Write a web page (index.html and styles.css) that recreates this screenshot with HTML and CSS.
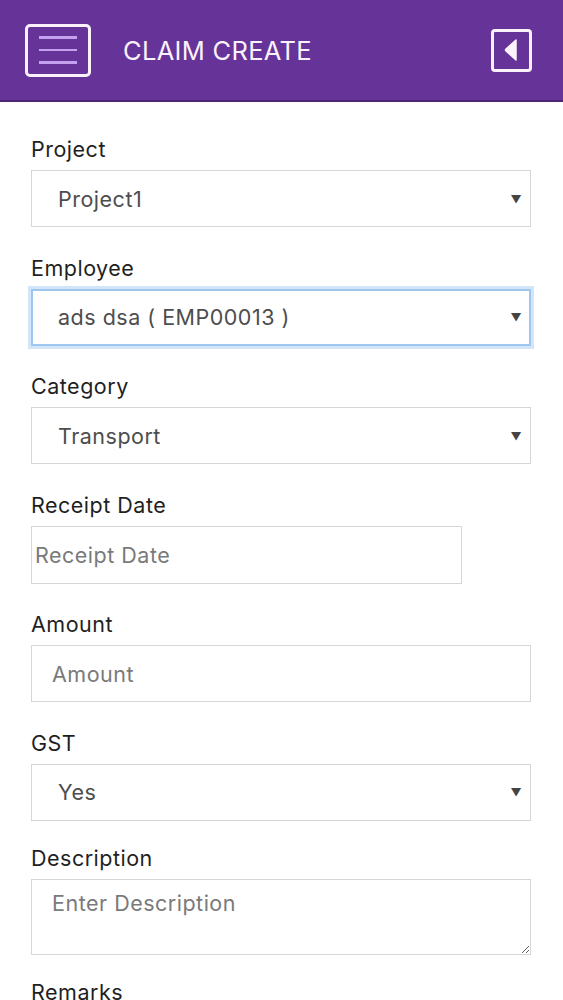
FILE: index.html
```html
<!DOCTYPE html>
<html lang="en">
<head>
  <meta charset="UTF-8" />
  <meta name="viewport" content="width=device-width, initial-scale=1.0"/>
  <title>Claim Create</title>
  <link rel="stylesheet" href="styles.css">
</head>
<body>

  <header class="topbar">
    <button class="menu-btn" type="button" aria-label="Menu">
      <span></span>
      <span></span>
      <span></span>
    </button>
    <h1 class="title">CLAIM CREATE</h1>
    <button class="back-btn" type="button" aria-label="Back">
      <svg width="14" height="22" viewBox="0 0 14 22">
        <path d="M12 1 L12 21 L2 12 Q1 11 2 10 Z" fill="#fdf3fd" stroke="#fdf3fd" stroke-width="1.5" stroke-linejoin="round"/>
      </svg>
    </button>
  </header>

  <form class="claim-form" id="claimForm">
    <div class="field">
      <label for="project">Project</label>
      <div class="select-wrap">
        <select id="project">
          <option>Project1</option>
        </select>
      </div>
    </div>

    <div class="field">
      <label for="employee">Employee</label>
      <div class="select-wrap">
        <select id="employee" class="focused">
          <option>ads dsa ( EMP00013 )</option>
        </select>
      </div>
    </div>

    <div class="field">
      <label for="category">Category</label>
      <div class="select-wrap">
        <select id="category">
          <option>Transport</option>
        </select>
      </div>
    </div>

    <div class="field">
      <label for="receiptDate">Receipt Date</label>
      <input type="text" id="receiptDate" class="date-input" placeholder="Receipt Date">
    </div>

    <div class="field">
      <label for="amount">Amount</label>
      <input type="text" id="amount" placeholder="Amount">
    </div>

    <div class="field">
      <label for="gst">GST</label>
      <div class="select-wrap">
        <select id="gst">
          <option>Yes</option>
          <option>No</option>
        </select>
      </div>
    </div>

    <div class="field field-area">
      <label for="description">Description</label>
      <textarea id="description" placeholder="Enter Description"></textarea>
    </div>

    <div class="field field-area">
      <label for="remarks">Remarks</label>
      <textarea id="remarks" placeholder="Enter Remarks"></textarea>
    </div>
  </form>

</body>
</html>
```

FILE: styles.css
```css
:root {
  --purple: #663399;
  --purple-dark: #4b2772;
  --header-text: #fbf1fb;
  --menu-line: #c4a0ee;
  --label-color: #1f1f1f;
  --value-color: #4d4d4d;
  --placeholder: #7a7a7a;
  --border: #d6d6d6;
}

body {
  margin: 0;
  font-family: Inter, "Open Sans", sans-serif;
  background-color: white;
  color: var(--label-color);
}

.topbar {
  display: flex;
  align-items: center;
  height: 100px;
  padding: 0 31px 0 25px;
  background-color: var(--purple);
  border-bottom: 2px solid var(--purple-dark);
}

.menu-btn {
  width: 66px;
  height: 53px;
  padding: 0;
  border: 3px solid var(--header-text);
  border-radius: 5px;
  background: transparent;
  display: flex;
  flex-direction: column;
  align-items: center;
  justify-content: center;
  gap: 10px;
  cursor: pointer;
}

.menu-btn span {
  display: block;
  width: 38px;
  height: 2.5px;
  background-color: var(--menu-line);
}

.title {
  margin: 0 0 0 32px;
  font-size: 25.5px;
  font-weight: 400;
  color: var(--header-text);
  letter-spacing: 0.3px;
}

.back-btn {
  margin-left: auto;
  width: 41px;
  height: 43px;
  padding: 0 2px 0 0;
  border: 3px solid var(--header-text);
  border-radius: 4px;
  background: transparent;
  display: flex;
  align-items: center;
  justify-content: center;
  cursor: pointer;
}

.claim-form {
  padding: 35px 32px 0 31px;
  letter-spacing: 0.5px;
}

.field {
  margin-bottom: 28.6px;
}

.field label {
  display: block;
  font-size: 21.5px;
  line-height: 24px;
  margin-bottom: 9px;
  color: var(--label-color);
}

.select-wrap {
  position: relative;
}

.select-wrap::after {
  content: "\25BC";
  position: absolute;
  right: 9px;
  top: 50%;
  transform: translateY(-50%);
  font-size: 11px;
  color: #444;
  pointer-events: none;
}

select,
input,
textarea {
  display: block;
  box-sizing: border-box;
  width: 100%;
  height: 57px;
  margin: 0;
  padding: 0 30px 0 26px;
  font-family: inherit;
  font-size: 21.5px;
  letter-spacing: inherit;
  color: var(--value-color);
  background-color: white;
  border: 1px solid var(--border);
  border-radius: 0;
  appearance: none;
  outline: none;
}

input {
  padding-left: 20px;
}

select.focused {
  border: 2px solid #9fc6ee;
  padding-left: 25px;
  box-shadow: 0 0 0 3px #d2e5f9;
}

input::placeholder,
textarea::placeholder {
  color: var(--placeholder);
}

.date-input {
  width: 431px;
  height: 58px;
  padding-left: 3px;
}

.field-area {
  margin-top: -4px;
  margin-bottom: 29px;
}

textarea {
  height: 76px;
  padding: 10px 20px;
  resize: vertical;
}
```
